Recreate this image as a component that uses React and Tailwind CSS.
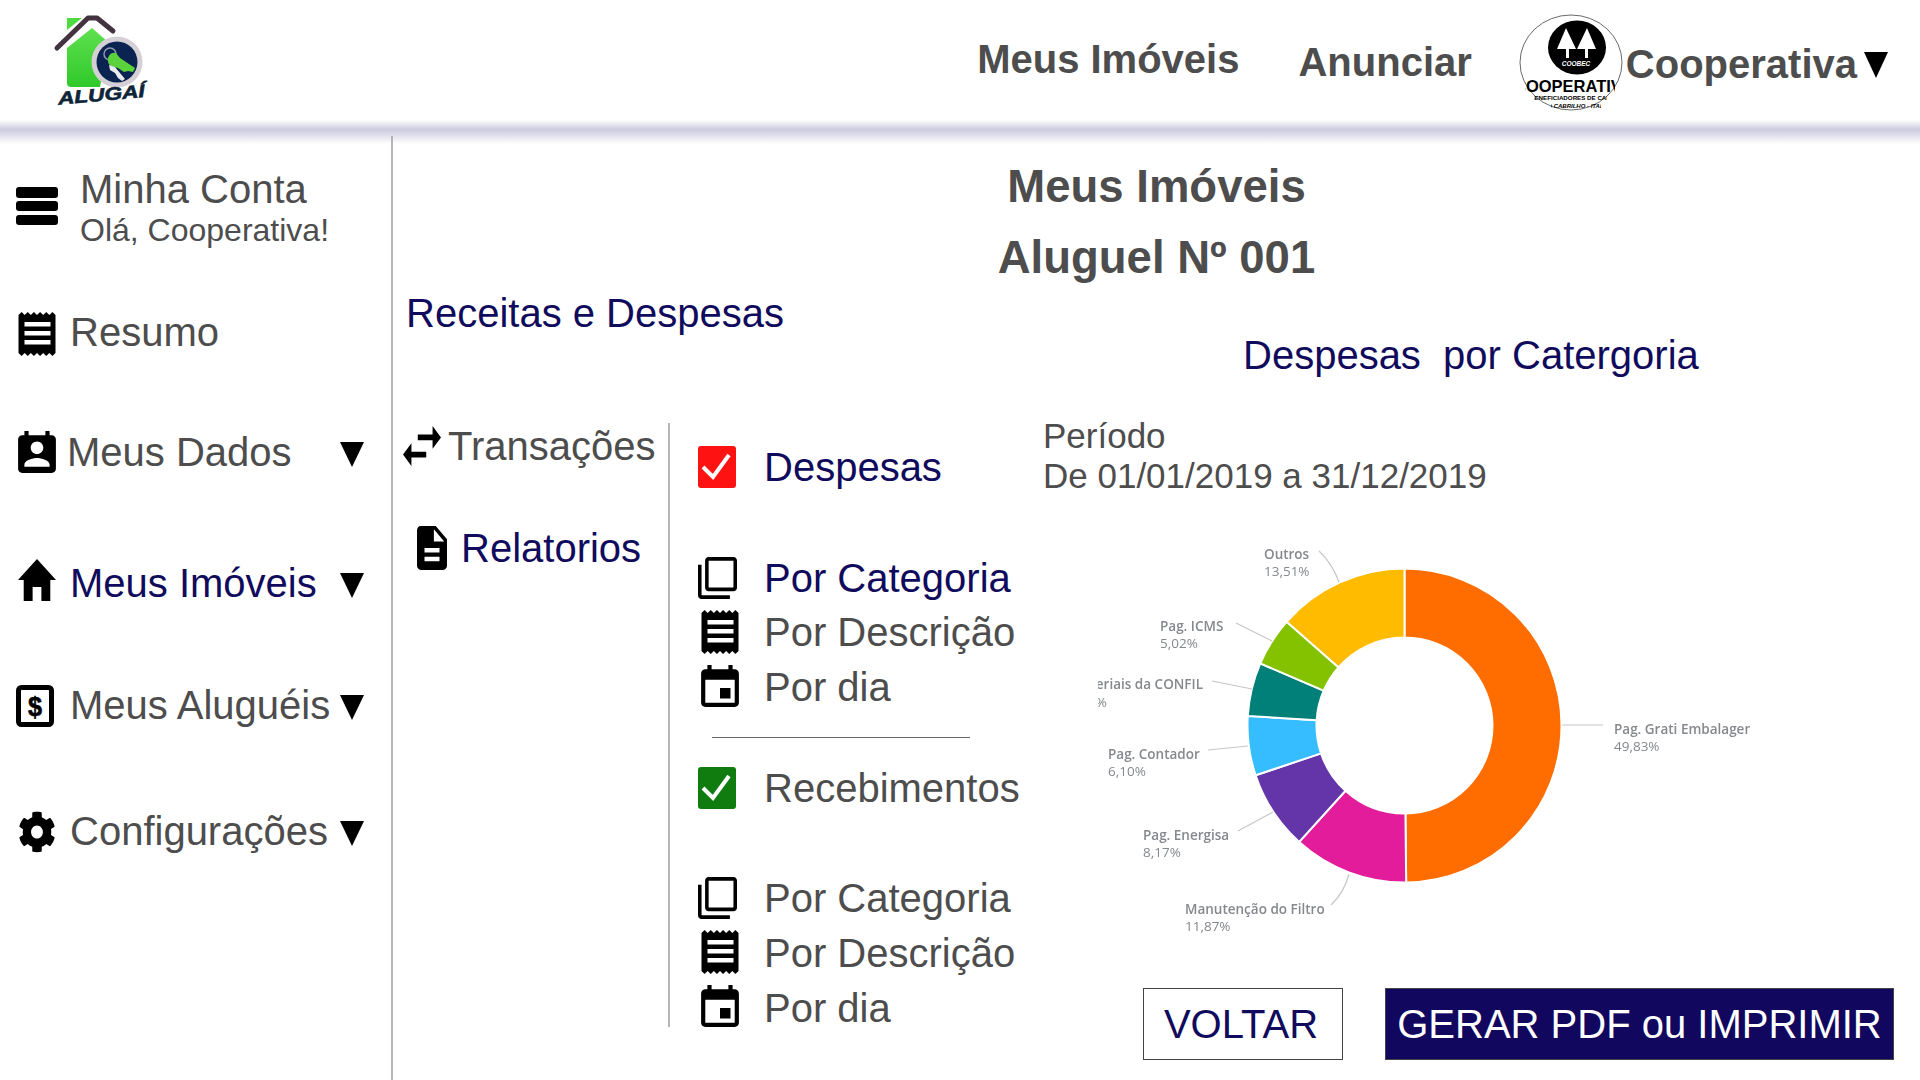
import {FaCog} from "react-icons/fa";

const slices = [
    {value: 49.83, color: "#ff6d00"},
    {value: 11.87, color: "#e31c9c"},
    {value: 8.17, color: "#6435a9"},
    {value: 6.10, color: "#35bdff"},
    {value: 5.50, color: "#008078"},
    {value: 5.02, color: "#84c200"},
    {value: 13.51, color: "#ffbb00"},
];

const labels = [
    {x: 1264, y: 559, name: "Outros", pct: "13,51%"},
    {x: 1160, y: 631, name: "Pag. ICMS", pct: "5,02%"},
    {x: 1108, y: 759, name: "Pag. Contador", pct: "6,10%"},
    {x: 1143, y: 840, name: "Pag. Energisa", pct: "8,17%"},
    {x: 1185, y: 914, name: "Manutenção do Filtro", pct: "11,87%"},
    {x: 1614, y: 734, name: "Pag. Grati Embalagem", pct: "49,83%"},
];

const leaders = [
    "M1319 551Q1332 563 1339 582",
    "M1236 623L1272 641",
    "M1212 681L1252 689",
    "M1208 750L1248 746",
    "M1238 831L1273 812",
    "M1331 905Q1344 893 1349 874",
    "M1562 725L1603 725",
];

function slicePath(startPct, value) {
    const cx = 1404.5, cy = 725.5, R = 157, r = 88;
    const a0 = (startPct / 100) * 2 * Math.PI;
    const a1 = ((startPct + value) / 100) * 2 * Math.PI;
    const large = value > 50 ? 1 : 0;
    const pt = (rad, a) => `${cx + rad * Math.sin(a)} ${cy - rad * Math.cos(a)}`;
    return `M${pt(R, a0)}A${R} ${R} 0 ${large} 1 ${pt(R, a1)}L${pt(r, a1)}A${r} ${r} 0 ${large} 0 ${pt(r, a0)}Z`;
}

function Donut() {
    let start = 0;
    return (
        <svg viewBox="1098 520 652 440" className="w-[652px] h-[440px] block blur-[0.4px]">
            {slices.map((s) => {
                const d = slicePath(start, s.value);
                start += s.value;
                return <path key={s.color} d={d} fill={s.color} stroke="#fff" strokeWidth="2"/>;
            })}
            {leaders.map((d) => (
                <path key={d} d={d} fill="none" stroke="#c4c6c9" strokeWidth="1.2"/>
            ))}
            <g fontFamily="'Open Sans', sans-serif" fontSize="13.5" fill="#85888d">
                {labels.map((l) => (
                    <g key={l.name}>
                        <text x={l.x} y={l.y} fontWeight="600">{l.name}</text>
                        <text x={l.x} y={l.y + 17}>{l.pct}</text>
                    </g>
                ))}
                <text x="1203" y="689" fontWeight="600" textAnchor="end">Materiais da CONFIL</text>
                <text x="1107" y="707" textAnchor="end">5,50%</text>
            </g>
        </svg>
    );
}

function Logo() {
    return (
        <svg viewBox="50 12 100 96" className="w-[100px] h-[96px] ml-[50px] shrink-0">
            <defs>
                <linearGradient id="houseGreen" x1="0" y1="0" x2="0" y2="1">
                    <stop offset="0" stopColor="#5fe04f"/>
                    <stop offset="1" stopColor="#2fc92a"/>
                </linearGradient>
            </defs>
            <path d="M67 18H82L67 30z" fill="#4fdc43"/>
            <path d="M67 48L92 28L108 42L100 87H71Q67 87 67 83z" fill="url(#houseGreen)"/>
            <path d="M57 48L88 18H97L113 31" fill="none" stroke="#43323f" strokeWidth="5" strokeLinecap="round" strokeLinejoin="round"/>
            <circle cx="117" cy="62" r="25.5" fill="#d5d0d5"/>
            <circle cx="117" cy="62" r="20.5" fill="#0b2350"/>
            <circle cx="110" cy="54" r="6" fill="none" stroke="#8f98ab" strokeWidth="1.5"/>
            <path d="M108 58q2-6 8-5l4 5 15 10-2 4-5-1-4 1-6-4-7-2q-4-3-3-8z" fill="#5bd23c"/>
            <path d="M109 65l6 2 10 12-3 2-4-3-3-5-5-3z" fill="#e8ebee"/>
            <text x="58" y="101" transform="rotate(-5 100 98)" fontFamily="'Liberation Sans', sans-serif" fontWeight="700" fontStyle="italic" fontSize="18" stroke="#0f2437" strokeWidth="0.6" textLength="87" lengthAdjust="spacingAndGlyphs" fill="#0f2437">ALUGAÍ</text>
        </svg>
    );
}

function CoopLogo() {
    return (
        <svg viewBox="0 0 106 98" className="w-[106px] h-[98px] shrink-0">
            <defs>
                <clipPath id="coopLine1"><rect x="6" y="60" width="90" height="20"/></clipPath>
                <clipPath id="coopLine2"><rect x="15" y="78" width="73" height="9"/></clipPath>
                <clipPath id="coopLine3"><rect x="32" y="87" width="50" height="9"/></clipPath>
            </defs>
            <ellipse cx="52" cy="48.5" rx="51" ry="47.5" fill="#fff" stroke="#444" strokeWidth="0.8"/>
            <ellipse cx="58" cy="33.5" rx="29" ry="27" fill="#000"/>
            <path d="M47 14l10 21h-7v9h-3v-9h-9zM68 14l9 21h-8v9h-3v-9h-8z" fill="#fff"/>
            <text x="57" y="52" textAnchor="middle" fontFamily="'Liberation Sans', sans-serif" fontWeight="700" fontStyle="italic" fontSize="6.5" fill="#fff">COOBEC</text>
            <g fontFamily="'Liberation Sans', sans-serif" fill="#000" fontWeight="700">
                <g clipPath="url(#coopLine1)"><text x="-5" y="78" fontSize="16.5">COOPERATIVA</text></g>
                <g clipPath="url(#coopLine2)"><text x="11" y="85.5" fontSize="6.2">BENEFICIADORES DE CARNE</text></g>
                <g clipPath="url(#coopLine3)"><text x="24" y="94" fontSize="6" fontStyle="italic">DO CABRILHO - ITABI</text></g>
            </g>
        </svg>
    );
}

function Triangle({className = "w-[24px] h-[25px] mt-[4px]"}) {
    return (
        <svg viewBox="0 0 24 25" preserveAspectRatio="none" className={className}>
            <polygon points="0,0 24,0 12,25"/>
        </svg>
    );
}

const receiptEdge = (y, dir) => {
    let pts = [];
    for (let i = 0; i <= 12; i++) {
        pts.push(`${(i * 37) / 12},${y + (i % 2 ? 0 : dir)}`);
    }
    return pts;
};
const receiptPoints = [...receiptEdge(0, 3), ...receiptEdge(44, -3).reverse()].join(" ");

function ReceiptIcon() {
    return (
        <svg viewBox="0 0 37 44" className="w-[38px] h-[44px]">
            <polygon points={receiptPoints}/>
            <rect x="6" y="10" width="26" height="4.5" fill="#fff"/>
            <rect x="6" y="19" width="26" height="4.5" fill="#fff"/>
            <rect x="6" y="28" width="26" height="4.5" fill="#fff"/>
        </svg>
    );
}

function ContactIcon() {
    return (
        <svg viewBox="3 1 18 20" className="w-[38px] h-[42px]">
            <path d="M19 3h-1V1h-2v2H8V1H6v2H5c-1.11 0-2 .9-2 2v14c0 1.1.89 2 2 2h14c1.1 0 2-.9 2-2V5c0-1.1-.9-2-2-2zm-7 3c1.66 0 3 1.34 3 3s-1.34 3-3 3-3-1.34-3-3 1.34-3 3-3zm6 12H6v-1c0-2 4-3.1 6-3.1s6 1.1 6 3.1v1z"/>
        </svg>
    );
}

function HomeIcon() {
    return (
        <svg viewBox="48 64 416 384" preserveAspectRatio="none" className="w-[38px] h-[42px] -mt-[3px]">
            <path d="M208 448V320h96v128h97.6V256H464L256 64 48 256h62.4v192z"/>
        </svg>
    );
}

function MoneyIcon() {
    return (
        <svg viewBox="0 0 38 42" className="w-[38px] h-[42px] -ml-[2px] mt-[1px]">
            <rect x="2.5" y="2.5" width="33" height="37" rx="3" fill="none" stroke="#000" strokeWidth="5"/>
            <text x="19" y="31" textAnchor="middle" fontFamily="'Liberation Sans', sans-serif" fontWeight="700" fontSize="28" stroke="#000" strokeWidth="0.6" textLength="14" lengthAdjust="spacingAndGlyphs">$</text>
        </svg>
    );
}

function SwapIcon() {
    return (
        <svg viewBox="3 5 18 14" preserveAspectRatio="none" className="w-[38px] h-[40px] shrink-0">
            <path d="M6.99 11L3 15l3.99 4v-3H14v-2H6.99v-3zM21 9l-3.99-4v3H10v2h7.01v3L21 9z"/>
        </svg>
    );
}

function FileIcon() {
    return (
        <svg viewBox="4 2 16 20" preserveAspectRatio="none" className="w-[30px] h-[44px] shrink-0">
            <path d="M14 2H6c-1.1 0-1.99.9-1.99 2L4 20c0 1.1.89 2 1.99 2H18c1.1 0 2-.9 2-2V8l-6-6zm2 16H8v-2h8v2zm0-4H8v-2h8v2zm-3-5V3.5L18.5 9H13z"/>
        </svg>
    );
}

function EventIcon({className}) {
    return (
        <svg viewBox="3 1 18 20" className={`w-[38px] h-[42px] ${className}`}>
            <path d="M17 12h-5v5h5v-5zM16 1v2H8V1H6v2H5c-1.11 0-1.99.9-1.99 2L3 19c0 1.1.89 2 2 2h14c1.1 0 2-.9 2-2V5c0-1.1-.9-2-2-2h-1V1h-2zm3 18H5V8h14v11z"/>
        </svg>
    );
}

function CopyIcon() {
    return (
        <svg viewBox="1 1 22 22" preserveAspectRatio="none" className="w-[39px] h-[42px]">
            <path d="M3 5H1v16c0 1.1.9 2 2 2h16v-2H3V5zm18-4H7c-1.1 0-2 .9-2 2v14c0 1.1.9 2 2 2h14c1.1 0 2-.9 2-2V3c0-1.1-.9-2-2-2zm0 16H7V3h14v14z"/>
        </svg>
    );
}

function CheckBox({className}) {
    return (
        <div className={`w-[38px] h-[42px] rounded-[3px] ${className}`}>
            <svg viewBox="0 0 38 42" className="w-[38px] h-[42px]">
                <path d="M5 21L15 31L31 9" fill="none" stroke="#fff" strokeWidth="4"/>
            </svg>
        </div>
    );
}

function SideItem({icon, label, gap, active, arrow = true, className}) {
    return (
        <div className={`flex items-center h-[60px] pl-[18px] pr-[27px] ${className}`}>
            <div className="w-[38px] h-[42px] shrink-0">{icon}</div>
            <span className={`text-[40px] leading-[46px] whitespace-nowrap ${gap} ${active ? "text-[#100b5c]" : ""}`}>{label}</span>
            {arrow && <div className="ml-auto"><Triangle/></div>}
        </div>
    );
}

function OptionRow({icon, label, active, className}) {
    return (
        <div className={`flex items-center h-[46px] ${className}`}>
            <div className="w-[66px] shrink-0">{icon}</div>
            <span className={`text-[40px] leading-[46px] whitespace-nowrap ${active ? "text-[#100b5c]" : ""}`}>{label}</span>
        </div>
    );
}

export default function App() {
    return (
        <div className="w-[1920px] h-[1080px] overflow-hidden bg-white text-[#4d4d4d] font-['Liberation_Sans',sans-serif]">
            <header className="h-[120px] flex items-center">
                <Logo/>
                <div className="ml-auto flex items-center">
                    <span className="text-[40px] font-bold leading-[46px] -mt-[2px]">Meus Imóveis</span>
                    <span className="text-[40px] font-bold leading-[46px] ml-[59px] mt-[3px]">Anunciar</span>
                    <div className="ml-[47px] mt-[6px]"><CoopLogo/></div>
                    <span className="text-[40px] font-bold leading-[46px] ml-[1px] mt-[8px]">Cooperativa</span>
                    <Triangle className="w-[24px] h-[26px] ml-[7px] mr-[32px] mt-[10px]"/>
                </div>
            </header>
            <div className="h-[24px] -mb-[8px] bg-gradient-to-b from-white via-[#cccbdf] via-40% to-white"></div>
            <div className="flex h-[944px]">
                <aside className="w-[393px] shrink-0 border-r-2 border-[#b5b5b5]">
                    <div className="flex items-center pl-[16px] mt-[30px]">
                        <svg viewBox="0 0 42 38" className="w-[42px] h-[38px] shrink-0 -mt-[3px]">
                            <rect width="42" height="11" rx="3"/>
                            <rect y="14" width="42" height="10" rx="3"/>
                            <rect y="28" width="42" height="10" rx="3"/>
                        </svg>
                        <div className="ml-[22px]">
                            <div className="text-[40px] leading-[46px]">Minha Conta</div>
                            <div className="text-[32px] leading-[35px] pt-px">Olá, Cooperativa!</div>
                        </div>
                    </div>
                    <SideItem icon={<div className="mt-[1px]"><ReceiptIcon/></div>} label="Resumo" gap="ml-[14px]" arrow={false} className="mt-[54px]"/>
                    <SideItem icon={<ContactIcon/>} label="Meus Dados" gap="ml-[11px]" className="mt-[60px]"/>
                    <SideItem icon={<HomeIcon/>} label="Meus Imóveis" gap="ml-[14px]" active className="mt-[71px]"/>
                    <SideItem icon={<MoneyIcon/>} label="Meus Aluguéis" gap="ml-[14px]" className="mt-[62px]"/>
                    <SideItem icon={<FaCog className="w-[38px] h-[42px] mt-[1px] text-black" preserveAspectRatio="none"/>} label="Configurações" gap="ml-[14px]" className="mt-[66px]"/>
                </aside>
                <main className="flex-1 flex flex-col">
                    <h1 className="text-[45.5px] font-bold leading-[50px] text-center mt-[26px]">Meus Imóveis</h1>
                    <h2 className="text-[45.5px] font-bold leading-[50px] text-center mt-[21px]">Aluguel Nº 001</h2>
                    <div className="text-[40px] leading-[46px] text-[#100b5c] pl-[13px] mt-[7px]">Receitas e Despesas</div>
                    <div className="text-[40px] leading-[46px] text-[#100b5c] pl-[850px] -mt-[4px] whitespace-pre">Despesas  por Catergoria</div>
                    <div className="flex items-start mt-[45px]">
                        <div className="w-[277px] h-[604px] shrink-0 border-r-2 border-[#b5b5b5]">
                            <div className="flex items-center h-[46px] pl-[10px]">
                                <SwapIcon/>
                                <span className="text-[40px] leading-[46px] ml-[7px] whitespace-nowrap">Transações</span>
                            </div>
                            <div className="flex items-center h-[46px] pl-[24px] mt-[56px]">
                                <FileIcon/>
                                <span className="text-[40px] leading-[46px] ml-[14px] whitespace-nowrap text-[#100b5c]">Relatorios</span>
                            </div>
                        </div>
                        <div className="w-[373px] shrink-0 pl-[28px] pt-[21px]">
                            <OptionRow icon={<CheckBox className="bg-[#ff1212]"/>} label="Despesas" active/>
                            <OptionRow icon={<CopyIcon/>} label="Por Categoria" active className="mt-[65px]"/>
                            <OptionRow icon={<div className="ml-[3px]"><ReceiptIcon/></div>} label="Por Descrição" className="mt-[8px]"/>
                            <OptionRow icon={<EventIcon className="ml-[3px] -mt-[2px]"/>} label="Por dia" className="mt-[9px]"/>
                            <div className="w-[258px] h-px bg-[#666] ml-[14px] mt-[27px]"></div>
                            <OptionRow icon={<CheckBox className="bg-[#107c10]"/>} label="Recebimentos" className="mt-[27px]"/>
                            <OptionRow icon={<CopyIcon/>} label="Por Categoria" className="mt-[64px]"/>
                            <OptionRow icon={<div className="ml-[3px] -mt-[2px]"><ReceiptIcon/></div>} label="Por Descrição" className="mt-[9px]"/>
                            <OptionRow icon={<EventIcon className="ml-[3px] -mt-[4px]"/>} label="Por dia" className="mt-[9px]"/>
                        </div>
                        <div className="-mt-[7px]">
                            <div className="text-[35px] leading-[40px] whitespace-nowrap">
                                <div>Período</div>
                                <div>De 01/01/2019 a 31/12/2019</div>
                            </div>
                            <div className="ml-[55px] mt-[24px]"><Donut/></div>
                            <div className="flex ml-[100px] mt-[28px] gap-[42px]">
                                <button className="w-[200px] h-[72px] border border-[#444] pr-[4px] text-[40px] text-[#100b5c]">VOLTAR</button>
                                <button className="w-[509px] h-[72px] border border-[#444] bg-[#12075e] text-[40px] text-white whitespace-nowrap">GERAR PDF ou IMPRIMIR</button>
                            </div>
                        </div>
                    </div>
                </main>
            </div>
        </div>
    );
}
